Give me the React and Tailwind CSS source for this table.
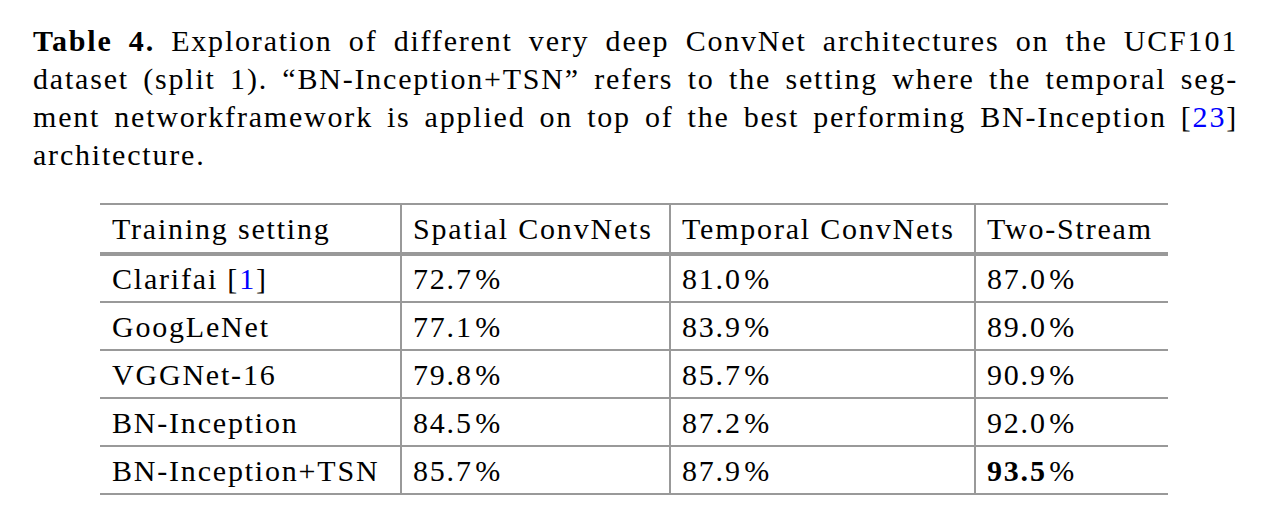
const rows = [
  { name: 'Clarifai', cite: '1', s: '72.7', t: '81.0', two: '87.0' },
  { name: 'GoogLeNet', s: '77.1', t: '83.9', two: '89.0' },
  { name: 'VGGNet-16', s: '79.8', t: '85.7', two: '90.9' },
  { name: 'BN-Inception', s: '84.5', t: '87.2', two: '92.0' },
  { name: 'BN-Inception+TSN', s: '85.7', t: '87.9', two: '93.5', best: true },
];

function Pct({ v, bold }) {
  return (
    <span>
      {bold ? <b>{v}</b> : v}
      <span className="tracking-normal">{'\u200a'}</span>%
    </span>
  );
}

export default function App() {
  return (
    <div className="w-[1286px] h-[526px] bg-white text-black font-['Liberation_Serif',serif] text-[30px] tracking-[1.8px] overflow-hidden">
      <div className="pl-[33px] pr-[48px] pt-[22px] leading-[38px]">
        <div className="text-justify [text-align-last:justify]">
          <b>Table 4.</b> Exploration of different very deep ConvNet architectures on the UCF101
        </div>
        <div className="text-justify [text-align-last:justify]">
          dataset (split 1). “BN-Inception+TSN” refers to the setting where the temporal seg-
        </div>
        <div className="text-justify [text-align-last:justify]">
          ment networkframework is applied on top of the best performing BN-Inception{' '}
          [<span className="text-[#0000ff]">23</span>]
        </div>
        <div>architecture.</div>
      </div>

      <div className="pl-[100px] pt-[29px]">
        <table className="border-collapse table-fixed w-[1068px]">
          <thead>
            <tr className="border-t-2 border-b-4 border-[#999]">
              <th className="w-[301px] h-[50px] pl-[12px] text-left font-normal">Training setting</th>
              <th className="w-[269px] pl-[11px] text-left font-normal border-l-2 border-[#999]">Spatial ConvNets</th>
              <th className="w-[305px] pl-[11px] text-left font-normal border-l-2 border-[#999]">Temporal ConvNets</th>
              <th className="w-[193px] pl-[11px] text-left font-normal border-l-2 border-[#999]">Two-Stream</th>
            </tr>
          </thead>
          <tbody>
            {rows.map((r) => (
              <tr key={r.name} className="border-b-2 border-[#999]">
                <td className="h-[48px] pl-[12px]">
                  {r.name}
                  {r.cite && (
                    <>
                      {' '}[<span className="text-[#0000ff]">{r.cite}</span>]
                    </>
                  )}
                </td>
                <td className="pl-[11px] border-l-2 border-[#999]"><Pct v={r.s} /></td>
                <td className="pl-[11px] border-l-2 border-[#999]"><Pct v={r.t} /></td>
                <td className="pl-[11px] border-l-2 border-[#999]"><Pct v={r.two} bold={r.best} /></td>
              </tr>
            ))}
          </tbody>
        </table>
      </div>
    </div>
  );
}
